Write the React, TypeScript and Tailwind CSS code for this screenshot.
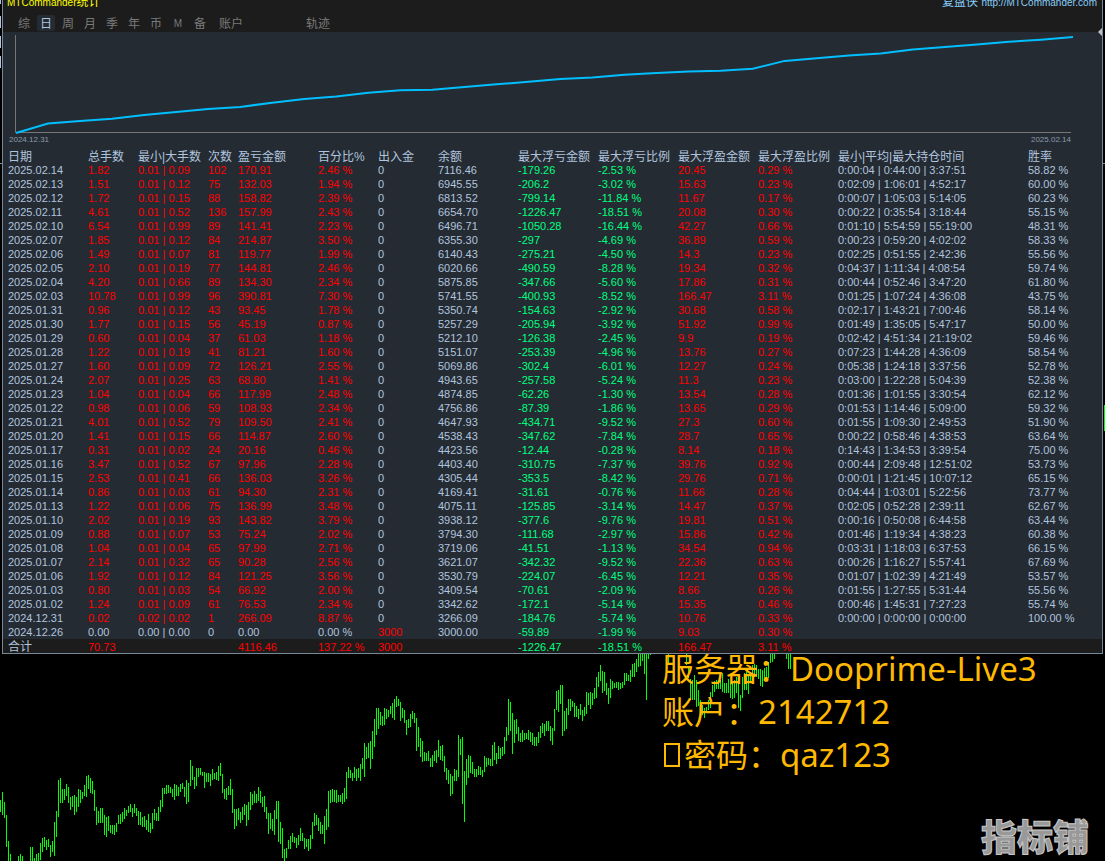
import React from "react";

const columns = [
  { label: "日期", width: "w-[80px]" },
  { label: "总手数", width: "w-[50px]" },
  { label: "最小|大手数", width: "w-[70px]" },
  { label: "次数", width: "w-[30px]" },
  { label: "盈亏金额", width: "w-[80px]" },
  { label: "百分比%", width: "w-[60px]" },
  { label: "出入金", width: "w-[60px]" },
  { label: "余额", width: "w-[80px]" },
  { label: "最大浮亏金额", width: "w-[80px]" },
  { label: "最大浮亏比例", width: "w-[80px]" },
  { label: "最大浮盈金额", width: "w-[80px]" },
  { label: "最大浮盈比例", width: "w-[80px]" },
  { label: "最小|平均|最大持仓时间", width: "w-[190px]" },
  { label: "胜率", width: "" },
];

// date, lots, smallest lot, largest lot, trades, profit, percent, deposit, balance,
// drawdown, drawdown %, float profit, float profit %, shortest, average, longest, win rate
const source = `2025.02.14 1.82 0.01 0.09 102 170.91 2.46 0 7116.46 -179.26 -2.53 20.45 0.29 0:00:04 0:44:00 3:37:51 58.82
2025.02.13 1.51 0.01 0.12 75 132.03 1.94 0 6945.55 -206.2 -3.02 15.63 0.23 0:02:09 1:06:01 4:52:17 60.00
2025.02.12 1.72 0.01 0.15 88 158.82 2.39 0 6813.52 -799.14 -11.84 11.67 0.17 0:00:07 1:05:03 5:14:05 60.23
2025.02.11 4.61 0.01 0.52 136 157.99 2.43 0 6654.70 -1226.47 -18.51 20.08 0.30 0:00:22 0:35:54 3:18:44 55.15
2025.02.10 6.54 0.01 0.99 89 141.41 2.23 0 6496.71 -1050.28 -16.44 42.27 0.66 0:01:10 5:54:59 55:19:00 48.31
2025.02.07 1.85 0.01 0.12 84 214.87 3.50 0 6355.30 -297 -4.69 36.89 0.59 0:00:23 0:59:20 4:02:02 58.33
2025.02.06 1.49 0.01 0.07 81 119.77 1.99 0 6140.43 -275.21 -4.50 14.3 0.23 0:02:25 0:51:55 2:42:36 55.56
2025.02.05 2.10 0.01 0.19 77 144.81 2.46 0 6020.66 -490.59 -8.28 19.34 0.32 0:04:37 1:11:34 4:08:54 59.74
2025.02.04 4.20 0.01 0.66 89 134.30 2.34 0 5875.85 -347.66 -5.60 17.86 0.31 0:00:44 0:52:46 3:47:20 61.80
2025.02.03 10.78 0.01 0.99 96 390.81 7.30 0 5741.55 -400.93 -8.52 166.47 3.11 0:01:25 1:07:24 4:36:08 43.75
2025.01.31 0.96 0.01 0.12 43 93.45 1.78 0 5350.74 -154.63 -2.92 30.68 0.58 0:02:17 1:43:21 7:00:46 58.14
2025.01.30 1.77 0.01 0.15 56 45.19 0.87 0 5257.29 -205.94 -3.92 51.92 0.99 0:01:49 1:35:05 5:47:17 50.00
2025.01.29 0.60 0.01 0.04 37 61.03 1.18 0 5212.10 -126.38 -2.45 9.9 0.19 0:02:42 4:51:34 21:19:02 59.46
2025.01.28 1.22 0.01 0.19 41 81.21 1.60 0 5151.07 -253.39 -4.96 13.76 0.27 0:07:23 1:44:28 4:36:09 58.54
2025.01.27 1.60 0.01 0.09 72 126.21 2.55 0 5069.86 -302.4 -6.01 12.27 0.24 0:05:38 1:24:18 3:37:56 52.78
2025.01.24 2.07 0.01 0.25 63 68.80 1.41 0 4943.65 -257.58 -5.24 11.3 0.23 0:03:00 1:22:28 5:04:39 52.38
2025.01.23 1.04 0.01 0.04 66 117.99 2.48 0 4874.85 -62.26 -1.30 13.54 0.28 0:01:36 1:01:55 3:30:54 62.12
2025.01.22 0.98 0.01 0.06 59 108.93 2.34 0 4756.86 -87.39 -1.86 13.65 0.29 0:01:53 1:14:46 5:09:00 59.32
2025.01.21 4.01 0.01 0.52 79 109.50 2.41 0 4647.93 -434.71 -9.52 27.3 0.60 0:01:55 1:09:30 2:49:53 51.90
2025.01.20 1.41 0.01 0.15 66 114.87 2.60 0 4538.43 -347.62 -7.84 28.7 0.65 0:00:22 0:58:46 4:38:53 63.64
2025.01.17 0.31 0.01 0.02 24 20.16 0.46 0 4423.56 -12.44 -0.28 8.14 0.18 0:14:43 1:34:53 3:39:54 75.00
2025.01.16 3.47 0.01 0.52 67 97.96 2.28 0 4403.40 -310.75 -7.37 39.76 0.92 0:00:44 2:09:48 12:51:02 53.73
2025.01.15 2.53 0.01 0.41 66 136.03 3.26 0 4305.44 -353.5 -8.42 29.76 0.71 0:00:01 1:21:45 10:07:12 65.15
2025.01.14 0.86 0.01 0.03 61 94.30 2.31 0 4169.41 -31.61 -0.76 11.66 0.28 0:04:44 1:03:01 5:22:56 73.77
2025.01.13 1.22 0.01 0.06 75 136.99 3.48 0 4075.11 -125.85 -3.14 14.47 0.37 0:02:05 0:52:28 2:39:11 62.67
2025.01.10 2.02 0.01 0.19 93 143.82 3.79 0 3938.12 -377.6 -9.76 19.81 0.51 0:00:16 0:50:08 6:44:58 63.44
2025.01.09 0.88 0.01 0.07 53 75.24 2.02 0 3794.30 -111.68 -2.97 15.86 0.42 0:01:46 1:19:34 4:38:23 60.38
2025.01.08 1.04 0.01 0.04 65 97.99 2.71 0 3719.06 -41.51 -1.13 34.54 0.94 0:03:31 1:18:03 6:37:53 66.15
2025.01.07 2.14 0.01 0.32 65 90.28 2.56 0 3621.07 -342.32 -9.52 22.36 0.63 0:00:26 1:16:27 5:57:41 67.69
2025.01.06 1.92 0.01 0.12 84 121.25 3.56 0 3530.79 -224.07 -6.45 12.21 0.35 0:01:07 1:02:39 4:21:49 53.57
2025.01.03 0.80 0.01 0.03 54 66.92 2.00 0 3409.54 -70.61 -2.09 8.66 0.26 0:01:55 1:27:55 5:31:44 55.56
2025.01.02 1.24 0.01 0.09 61 76.53 2.34 0 3342.62 -172.1 -5.14 15.35 0.46 0:00:46 1:45:31 7:27:23 55.74
2024.12.31 0.02 0.02 0.02 1 266.09 8.87 0 3266.09 -184.76 -5.74 10.76 0.33 0:00:00 0:00:00 0:00:00 100.00
2024.12.26 0.00 0.00 0.00 0 0.00 0.00 3000 3000.00 -59.89 -1.99 9.03 0.30`;

const records = source.split("\n").map((line) => line.split(" "));

function toCells(r: string[]) {
  return [
    r[0],
    r[1],
    `${r[2]} | ${r[3]}`,
    r[4],
    r[5],
    `${r[6]} %`,
    r[7],
    r[8],
    r[9],
    `${r[10]} %`,
    r[11],
    `${r[12]} %`,
    r[13] ? `${r[13]} | ${r[14]} | ${r[15]}` : "",
    r[16] ? `${r[16]} %` : "",
  ];
}

const totals = ["合计", "70.73", "", "", "4116.46", "137.22 %", "3000", "", "-1226.47", "-18.51 %", "166.47", "3.11 %", "", ""];

function toneOf(column: number, value: string) {
  if (column === 8 || column === 9) return "text-[#00ff7f]";
  if (column === 0 || column === 7 || column >= 12) return "text-[#b0c4de]";
  return parseFloat(value) === 0 ? "text-[#b0c4de]" : "text-[#ff0000]";
}

// Equity is drawn on a logarithmic scale, oldest balance first.
const balances = records.map((r) => parseFloat(r[8])).reverse();
const span = Math.log(balances[balances.length - 1] / balances[0]);
const equityPoints = balances
  .map((b, i) => `${(13 + (i * 1057) / (balances.length - 1)).toFixed(1)},${(101 - (96 * Math.log(b / balances[0])) / span).toFixed(1)}`)
  .join(" ");

const tabs = ["综", "日", "周", "月", "季", "年", "币", "M", "备"];

// Each bar is high-low in thirds of a pixel below the segment's base.
const segments = [
  {
    start: 0,
    base: 42,
    bars: `480-516 456-525 486-534 525-621 603-663 642-663 - - - 648-663 642-663 648-663 - - - 621-663 621-663 654-663 642-663 639-663
609-660 594-636 591-621 600-630 597-621 615-651 603-636 546-648 513-591 420-531 414-489 447-489 447-480 432-468 441-489 471-510 468-501 465-525 471-516 447-501
450-489 456-477 435-468 408-471 405-447 414-459 423-462 450-513 501-555 513-549 504-549 504-549 525-585 531-591 528-573 555-579 555-582 555-585 549-576 525-552
522-552 516-546 504-537 510-528 498-519 492-516 504-531 492-519 504-528 513-555 516-555 531-561 528-561 540-570 522-576 549-579 519-567 507-540 519-543 501-543
480-516 444-501 444-462 435-462 435-459 441-459 447-471 432-480 435-468 441-468 432-456 429-447 441-471 420-492 429-486 360-438 378-420 411-447 384-438 384-411
384-405 396-408 396-444 399-426 399-426 402-438 387-420 399-417 396-420 378-423 369-408 402-459 447-477 444-480 438-465 417-465 447-519 507-567 507-558 504-540
516-549 501-540 492-525 495-558 486-540 456-510 462-495 453-489 462-489 441-483 453-489 471-501 468-516 501-537 519-582 519-567 537-573 510-585 483-537 483-606
546-612 564-654 627-663 624-654 600-627 588-627 579-606 591-609 594-624 585-615 564-603 579-603 594-627 597-621 597-633 585-627 546-597 519-558 525-555 534-573
546-582 555-582 528-612 507-570 453-561 450-489 447-486 450-486 450-489 465-486 465-486 459-492 444-486 396-477 381-414 390-414 399-423 381-414 387-423 384-414`,
  },
  {
    start: 180,
    base: 27,
    bars: `357-408 339-372 294-396 306-342 294-339 288-372 258-342 222-306 189-270 189-252 201-240 213-243 189-240 192-222 195-216 183-207 174-219 162-225 153-186 162-183
171-228 189-219 195-234 225-270 222-249 207-246 198-222 204-234 219-318 246-306 279-336 288-351 321-348 324-348 318-348 339-366 330-366 318-348 315-354 285-336
303-345 300-348 333-381 369-405 375-417 387-453 393-447 372-408 375-408 270-396 282-330 276-477 378-531 342-420 330-399 333-384 351-387 372-396 372-396 363-390
366-390 375-396 333-381 339-366 339-360 342-363 300-363 291-345 324-357 303-342 309-342 306-333 276-327 246-288 162-270 171-258 204-327 225-294 222-267 246-288
264-291 255-291 264-285 264-282 255-285 261-291 264-300 276-303 276-303 261-294 243-279 234-264 237-273 228-258 228-258 243-288 249-300 192-258 138-195 135-201
120-177 120-273 198-258 189-252 162-210 162-198 168-186 174-216 183-216 192-222 177-210 195-228 186-213 141-207 144-180 141-192 144-180 129-162 96-159 81-126
60-108 78-144 81-138 114-150 129-177 102-159 108-132 114-129 111-129 111-135 114-132 111-129 84-120 84-108 90-108 75-111 57-96 54-96 42-81 27-66
27-63 27-48 27-87 27-165 27-42 27-30 - - - - - - - - 27-54 - - - - - - - - 27-60
66-99 102-165 105-165 90-165 105-186 135-183 165-201 180-210 189-219 186-201 165-195 141-189 120-156 108-141 105-132 105-132 105-132 84-141 114-144 114-144
102-144 111-159 114-162 105-159 96-144 114-189 150-198 96-159 84-135 75-135 90-147 81-111 60-99 57-96 60-96 72-102 72-123 75-126 69-108 66-105
51-99 27-54 27-51 27-42 - - - - - 27-42 27-72 27-72`,
  },
];

const pricePath = segments
  .map((s) =>
    s.bars
      .split(/\s+/)
      .map((bar, i) => {
        if (bar === "-") return "";
        const [high, low] = bar.split("-").map(Number);
        return `M${(s.start + i) * 2 + 0.5} ${(high - s.base) / 3}V${(low - s.base) / 3}`;
      })
      .join("")
  )
  .join("");

function EquityChart() {
  return (
    <div className="h-[117px]">
      <svg viewBox="0 0 1099 102" preserveAspectRatio="none" className="block h-[102px] w-full" aria-hidden="true">
        <path d="M12.5 3V100.5H1068" fill="none" stroke="#767676" />
        <polyline points={equityPoints} fill="none" stroke="#00bfff" strokeWidth="2" />
      </svg>
      <div className="flex justify-between pr-[31px] pl-[6px] text-[8px] leading-[12px] text-[#8a9bad]">
        <span>2024.12.31</span>
        <span>2025.02.14</span>
      </div>
    </div>
  );
}

function Tabs() {
  return (
    <nav className="flex h-[22px] gap-1 pt-[5px] pl-[12px] text-[12px] leading-[14px] text-[#7a7a7a]">
      {tabs.map((tab) => (
        <button
          key={tab}
          type="button"
          className={
            tab === "日"
              ? "h-4 w-[18px] rounded-[2px] bg-[#252b33] pt-[2px] text-[#b0c4de]"
              : tab === "M"
                ? "h-4 w-[18px] pt-[2px] text-[10px]"
                : "h-4 w-[18px] pt-[2px]"
          }
        >
          {tab}
        </button>
      ))}
      <button type="button" className="h-4 w-9 pt-[2px]">账户</button>
      <button type="button" className="ml-[47px] h-4 w-9 pt-[2px]">轨迹</button>
    </nav>
  );
}

function StatsTable() {
  return (
    <table className="w-full table-fixed border-collapse text-left text-[11px] leading-[14px] whitespace-nowrap">
      <thead>
        <tr className="h-[14px] text-[12px] leading-[12px] text-[#b0c4de]">
          <td className="w-[5px] p-0" />
          {columns.map((c) => (
            <th key={c.label} scope="col" className={`${c.width} p-0 pt-[2px] font-normal`}>
              {c.label}
            </th>
          ))}
        </tr>
      </thead>
      <tbody>
        {records.map((r) => (
          <tr key={r[0]} className="h-[14px]">
            <td className="p-0" />
            {toCells(r).map((value, i) => (
              <td key={i} className={`p-0 ${toneOf(i, value)}`}>
                {value}
              </td>
            ))}
          </tr>
        ))}
      </tbody>
      <tfoot>
        <tr className="h-[14px] bg-[#1c1c1c] leading-[12px]">
          <td className="p-0" />
          {totals.map((value, i) => (
            <td key={i} className={i === 0 ? "p-0 pt-[2px] text-[12px] text-[#b0c4de]" : `p-0 pt-[2px] ${toneOf(i, value)}`}>
              {value}
            </td>
          ))}
        </tr>
      </tfoot>
    </table>
  );
}

export default function App() {
  return (
    <main className="relative flex min-h-screen flex-col overflow-hidden bg-black font-['Liberation_Sans','Noto_Sans_CJK_SC',sans-serif]">
      <div className="absolute top-0 left-0 flex flex-col gap-2">
        <span className="h-1 w-px bg-[#b0c4de]" />
        <span className="mt-1 h-3 w-px bg-[#b0c4de]" />
        <span className="h-3 w-px bg-[#b0c4de]" />
        <span className="h-3 w-px bg-[#b0c4de]" />
      </div>
      <span className="absolute top-[163px] left-0 h-px w-full bg-[#778899]" />
      <span className="absolute top-[405px] right-0 h-[26px] w-px bg-[#00ff00]" />

      <section className="relative mr-[2px] ml-[2px] border border-t-0 border-[#778899] bg-[#252b33]">
        <div className="bg-[#1c1c1c]">
          <header className="flex h-[10px] items-end justify-between overflow-hidden pr-[5px] pl-1 text-[12px] leading-[14px]">
            <h1 className="text-[#ffff00]">
              <span className="text-[10px]">MTCommander</span>统计
            </h1>
            <p className="text-[#87cefa]">
              复盘侠{" "}
              <a href="http://MTCommander.com" className="text-[10px]">
                http://MTCommander.com
              </a>
            </p>
          </header>
          <Tabs />
        </div>
        <svg viewBox="0 0 4 8" className="absolute top-[28px] right-0 h-2 w-1" aria-hidden="true">
          <path d="M4 0V8L0 4Z" fill="#c0c0c0" />
        </svg>
        <EquityChart />
        <StatsTable />
      </section>

      <section className="relative h-[207px]">
        <svg viewBox="0 0 1105 207" preserveAspectRatio="none" className="block h-full w-full" shapeRendering="crispEdges" aria-hidden="true">
          <path d={pricePath} fill="none" stroke="#00ff00" />
        </svg>
        <div className="absolute -top-[7px] left-[662px] font-['Noto_Sans','Noto_Sans_CJK_SC',sans-serif] text-[32px] leading-[43px] whitespace-nowrap text-[#ffb900]">
          <p className="h-[43px]">服务器：<span className="text-[33px]">Dooprime-Live3</span></p>
          <p className="h-[43px]">账户：<span className="text-[33px]">2142712</span></p>
          <p className="h-[43px]">
            <span className="mr-1 ml-[2px] inline-block h-6 w-4 border-2 border-[#ffb900]" aria-hidden="true" />
            密码：<span className="text-[33px]">qaz123</span>
          </p>
        </div>
        <div className="absolute right-4 bottom-[6px] font-['Noto_Sans_CJK_SC',sans-serif] text-[36px] leading-[40px] font-black text-[#999999] [-webkit-text-stroke:1px_#c8c8c8]">
          指标铺
        </div>
      </section>
    </main>
  );
}
